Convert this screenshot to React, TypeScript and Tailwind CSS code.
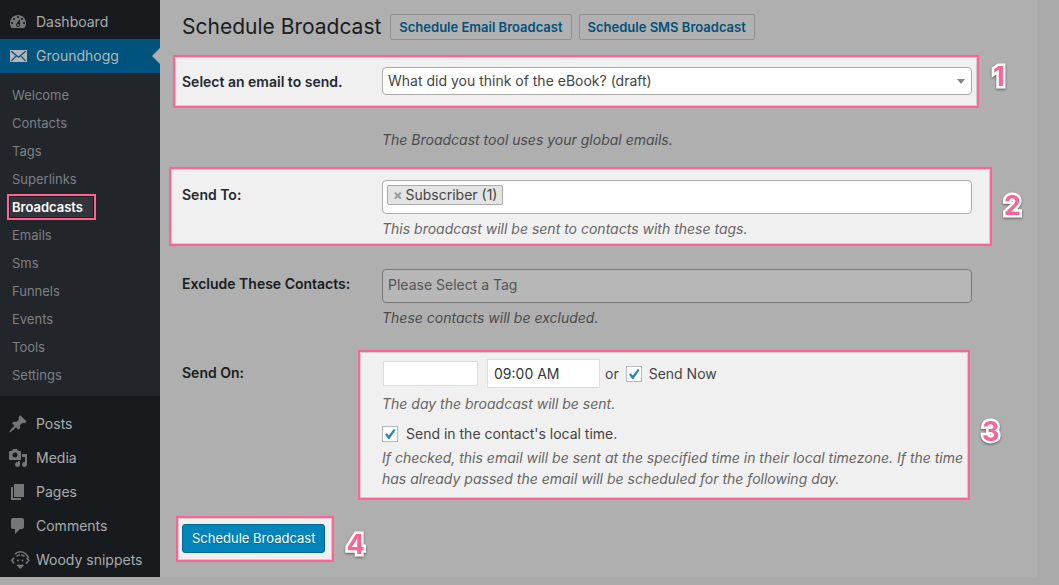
import React, { useState } from 'react';
import type { ReactNode } from 'react';
import clsx from 'clsx';

const MENU_ICONS = {
  dashboard:
    'M3.76 16h12.48c1.1-1.37 1.76-3.11 1.76-5 0-4.42-3.58-8-8-8s-8 3.58-8 8c0 1.89.66 3.63 1.76 5zM10 4c.55 0 1 .45 1 1s-.45 1-1 1-1-.45-1-1 .45-1 1-1zM6 6c.55 0 1 .45 1 1s-.45 1-1 1-1-.45-1-1 .45-1 1-1zm8 0c.55 0 1 .45 1 1s-.45 1-1 1-1-.45-1-1 .45-1 1-1zm-5.37 5.55L12 7v6c0 1.1-.9 2-2 2s-2-.9-2-2c0-.57.24-1.08.63-1.45zM4 10c.55 0 1 .45 1 1s-.45 1-1 1-1-.45-1-1 .45-1 1-1zm12 0c.55 0 1 .45 1 1s-.45 1-1 1-1-.45-1-1 .45-1 1-1zm-5 3c0-.55-.45-1-1-1s-1 .45-1 1 .45 1 1 1 1-.45 1-1z',
  posts:
    'M10.44 3.02l1.82-1.82 6.36 6.35-1.83 1.82c-1.05-.68-2.48-.57-3.41.36l-.75.75c-.92.93-1.04 2.35-.35 3.41l-1.83 1.82-2.41-2.41-2.8 2.79c-.42.42-3.38 2.71-3.8 2.29s1.86-3.39 2.28-3.81l2.79-2.79L4.1 9.36l1.83-1.82c1.05.69 2.48.57 3.4-.36l.75-.75c.93-.92 1.05-2.35.36-3.41z',
  media:
    'M13 11V4c0-.55-.45-1-1-1h-1.67L9 1H5L3.67 3H2c-.55 0-1 .45-1 1v7c0 .55.45 1 1 1h10c.55 0 1-.45 1-1zM7 4.5c1.38 0 2.5 1.12 2.5 2.5S8.38 9.5 7 9.5 4.5 8.38 4.5 7 5.62 4.5 7 4.5zM14 6h5v10.5c0 1.38-1.12 2.5-2.5 2.5S14 17.88 14 16.5s1.12-2.5 2.5-2.5c.17 0 .34.02.5.05V9h-3V6zm-4 8.05V13h2v3.5c0 1.38-1.12 2.5-2.5 2.5S7 17.88 7 16.5 8.12 14 9.5 14c.17 0 .34.02.5.05z',
  pages: 'M6 15V2h10v13H6zm-1 1h8v2H3V5h2v11z',
  comments: 'M5 2h9c1.1 0 2 .9 2 2v7c0 1.1-.9 2-2 2h-2l-5 5v-5H5c-1.1 0-2-.9-2-2V4c0-1.1.9-2 2-2z',
};

const SUBMENU = [
  'Welcome',
  'Contacts',
  'Tags',
  'Superlinks',
  'Broadcasts',
  'Emails',
  'Sms',
  'Funnels',
  'Events',
  'Tools',
  'Settings',
];

function MenuIcon({ name }: { name: keyof typeof MENU_ICONS }) {
  return (
    <svg viewBox="0 0 20 20" className="size-5 shrink-0 fill-[#747679]" aria-hidden="true">
      <path fillRule="evenodd" d={MENU_ICONS[name]} />
    </svg>
  );
}

function EnvelopeIcon() {
  return (
    <svg viewBox="0 0 20 20" className="size-5 shrink-0" aria-hidden="true">
      <path fill="#b4b7b9" d="M2 4h17v12H2z" />
      <path
        fill="none"
        stroke="#00537d"
        strokeWidth="1.3"
        strokeLinecap="round"
        d="M3.6 5.6l6.9 5.6 6.9-5.6M3.8 14.6l4-4.2M17.2 14.6l-4-4.2"
      />
    </svg>
  );
}

function WoodyIcon() {
  return (
    <svg viewBox="0 0 20 20" className="size-5 shrink-0 overflow-visible" aria-hidden="true">
      <g fill="none" stroke="#747679" strokeWidth="1.6">
        <path d="M6.2 7.8L3.8 10.4l2.4 3" />
        <path d="M18.6 8l2.2 2.4-2.8 3.4" />
        <path d="M7 4.2c2.6-3 8-3.4 10.8-.2 1.400 1.200 2.200 2.600 2.600 4.200" />
        <path d="M8.600 6.600c2.200-2.600 6.400-2.600 8.400.6" strokeDasharray="4 1" />
      </g>
      <g fill="#747679">
        <circle cx="10" cy="10.500" r="1" />
        <circle cx="14.500" cy="10.500" r="1" />
        <path d="M8.500 15.300l2-1 1.800.8 1.800-.8 2 1-3.800 3.700z" />
      </g>
    </svg>
  );
}

function MenuItem({ icon, label, current }: { icon: ReactNode; label: string; current?: boolean }) {
  return (
    <a
      href="#"
      className={clsx(
        'relative flex h-[34px] items-center gap-2 pl-2 text-sm',
        current ? 'bg-[#00537d] text-[#b4b7b9]' : 'text-[#a9abad]'
      )}
    >
      {icon}
      {label}
      {current && (
        <span className="absolute right-0 top-[9px] border-y-8 border-r-8 border-y-transparent border-r-[#afafaf]" />
      )}
    </a>
  );
}

function Sidebar() {
  return (
    <nav className="w-40 shrink-0 bg-[#181b1e] pt-[5px]">
      <MenuItem icon={<MenuIcon name="dashboard" />} label="Dashboard" />
      <MenuItem icon={<EnvelopeIcon />} label="Groundhogg" current />
      <ul className="mb-[11px] bg-[#22252a] pb-[7px] pl-3 pt-2 text-[13px]">
        {SUBMENU.map((item) => (
          <li key={item} className="flex h-7 items-center">
            {item === 'Broadcasts' ? (
              <a
                href="#"
                className="-ml-[5px] flex h-[26px] items-center border-2 border-[#ff6394] bg-[#32353a] pl-[3px] pr-[11px] font-semibold text-white shadow-[inset_0_0_0_1px_#1a1c20]"
              >
                {item}
              </a>
            ) : (
              <a href="#" className="text-[#7d8084]">
                {item}
              </a>
            )}
          </li>
        ))}
      </ul>
      <MenuItem icon={<MenuIcon name="posts" />} label="Posts" />
      <MenuItem icon={<MenuIcon name="media" />} label="Media" />
      <MenuItem icon={<MenuIcon name="pages" />} label="Pages" />
      <MenuItem icon={<MenuIcon name="comments" />} label="Comments" />
      <MenuItem icon={<WoodyIcon />} label="Woody snippets" />
    </nav>
  );
}

interface StepProps {
  number: number;
  className: string;
  badgeClassName: string;
  children: ReactNode;
}

function Step({ number, className, badgeClassName, children }: StepProps) {
  return (
    <section
      className={clsx(
        'relative border-2 border-[#ff6394] bg-[#f0f0f0] shadow-[inset_0_0_0_1px_#cfcfcf]',
        className
      )}
    >
      {children}
      <span
        className={clsx(
          'absolute left-full text-[27px] font-bold leading-8 text-[#ff6394] [-webkit-text-stroke:5px_white] [paint-order:stroke_fill] [stroke-linejoin:round] drop-shadow-[0_1px_1px_rgba(0,0,0,0.5)]',
          badgeClassName
        )}
      >
        {number}
      </span>
    </section>
  );
}

function Checkbox({ id, checked, onChange }: { id: string; checked: boolean; onChange: (v: boolean) => void }) {
  return (
    <span className="relative size-4 shrink-0">
      <input
        id={id}
        type="checkbox"
        checked={checked}
        onChange={(e) => onChange(e.target.checked)}
        className="block size-4 appearance-none border border-[#b4b9be] bg-white"
      />
      {checked && (
        <svg viewBox="0 0 16 16" className="pointer-events-none absolute inset-0 size-4" aria-hidden="true">
          <path d="M3 8.400l1.800-1.200 2 2.300 5-6.500 1.800.9-6.200 9.200h-1.200z" fill="#2a86b5" />
        </svg>
      )}
    </span>
  );
}

function Hint({ children, dimmed }: { children: ReactNode; dimmed?: boolean }) {
  return <p className={clsx('text-sm italic leading-5', dimmed ? 'text-[#4a4b4d]' : 'text-[#666]')}>{children}</p>;
}

export default function App() {
  const [sendNow, setSendNow] = useState(true);
  const [localTime, setLocalTime] = useState(true);
  const [date, setDate] = useState('');
  const [time, setTime] = useState('09:00 AM');

  return (
    <div className="flex min-h-screen bg-[#aaa] pb-2 font-['Inter','Liberation_Sans',sans-serif] text-sm text-[#444]">
      <Sidebar />
      <main className="mr-[22px] min-w-0 flex-1 bg-[#afafaf] pl-[22px] pr-[65px]">
        <header className="flex h-[55px] items-start pt-[14px]">
          <h1 className="mr-[9px] text-[21px] leading-[26px] text-[#191c20]">Schedule Broadcast</h1>
          <div className="flex gap-[7px]">
            {['Schedule Email Broadcast', 'Schedule SMS Broadcast'].map((label) => (
              <a
                key={label}
                href="#"
                className="flex h-[26px] items-center rounded-[2px] border border-[#8f8f8f] bg-[#b1b1b1] px-2 text-[13px] font-semibold text-[#00517c]"
              >
                {label}
              </a>
            ))}
          </div>
        </header>

        <form onSubmit={(e) => e.preventDefault()}>
          <Step
            number={1}
            className="-ml-[9px] -mr-[7px] flex pb-[11px] pl-[7px] pr-[5px] pt-[10px]"
            badgeClassName="ml-4 top-1"
          >
            <label htmlFor="email" className="w-[200px] shrink-0 pt-[5px] font-semibold leading-5 text-[#23282d]">
              Select an email to send.
            </label>
            <div className="relative flex-1">
              <select
                id="email"
                className="block h-7 w-full appearance-none rounded border border-[#aaa] bg-white px-[5px] text-sm text-[#444]"
              >
                <option>What did you think of the eBook? (draft)</option>
              </select>
              <span className="pointer-events-none absolute right-[7px] top-3 border-x-4 border-t-[5px] border-x-transparent border-t-[#888]" />
            </div>
          </Step>

          <div className="mb-[17px] mt-[22px] pl-[200px]">
            <Hint dimmed>The Broadcast tool uses your global emails.</Hint>
          </div>

          <Step
            number={2}
            className="-ml-[13px] -mr-[20px] flex pb-[5px] pl-[11px] pr-[18px] pt-[11px]"
            badgeClassName="ml-[14px] top-[21px]"
          >
            <label htmlFor="tags" className="w-[200px] shrink-0 pt-[5px] font-semibold leading-5 text-[#23282d]">
              Send To:
            </label>
            <div className="flex-1">
              <div className="mb-[5px] flex h-[34px] items-start rounded border border-[#aaa] bg-white px-1 pt-1">
                <span className="flex h-5 shrink-0 items-center gap-[3px] rounded-[2px] border border-[#aaa] bg-[#e4e4e4] px-[5px]">
                  <button type="button" aria-label="Remove Subscriber" className="font-bold text-[#999]">
                    ×
                  </button>
                  Subscriber (1)
                </span>
                <input id="tags" type="text" className="h-5 min-w-0 flex-1 px-1 outline-none" />
              </div>
              <Hint>This broadcast will be sent to contacts with these tags.</Hint>
            </div>
          </Step>

          <div className="mt-[23px] flex">
            <label htmlFor="exclude" className="w-[200px] shrink-0 pt-[5px] font-semibold leading-5 text-[#191c20]">
              Exclude These Contacts:
            </label>
            <div className="flex-1">
              <input
                id="exclude"
                type="text"
                placeholder="Please Select a Tag"
                className="mb-[5px] block h-[34px] w-full rounded border border-[#777] bg-[#b7b7b7] px-[5px] pb-1 text-sm placeholder:text-[#555]"
              />
              <Hint dimmed>These contacts will be excluded.</Hint>
            </div>
          </div>

          <div className="mt-[22px] flex">
            <label htmlFor="date" className="w-[176px] shrink-0 pt-[13px] font-semibold leading-5 text-[#191c20]">
              Send On:
            </label>
            <Step
              number={3}
              className="mr-[2px] flex-1 pb-[9px] pl-[22px] pt-[7px]"
              badgeClassName="ml-[14px] top-[64px]"
            >
              <div className="mb-[6px] flex items-center">
                <input
                  id="date"
                  type="text"
                  value={date}
                  onChange={(e) => setDate(e.target.value)}
                  className="ml-px h-[25px] w-[95px] border border-[#ddd] bg-white px-[6px]"
                />
                <input
                  type="text"
                  aria-label="Time"
                  value={time}
                  onChange={(e) => setTime(e.target.value)}
                  className="ml-[9px] h-[29px] w-[113px] border border-[#ddd] bg-white px-[6px] text-[#32373c]"
                />
                <span className="mx-[5px] pr-[2px]">or</span>
                <Checkbox id="send-now" checked={sendNow} onChange={setSendNow} />
                <label htmlFor="send-now" className="ml-[7px]">
                  Send Now
                </label>
              </div>
              <Hint>The day the broadcast will be sent.</Hint>
              <div className="mb-[3px] mt-[10px] flex items-center leading-5">
                <Checkbox id="local-time" checked={localTime} onChange={setLocalTime} />
                <label htmlFor="local-time" className="ml-2">
                  Send in the contact's local time.
                </label>
              </div>
              <p className="text-sm italic leading-[21px] text-[#666]">
                If checked, this email will be sent at the specified time in their local timezone. If the time has
                already passed the email will be scheduled for the following day.
              </p>
            </Step>
          </div>

          <Step
            number={4}
            className="-ml-[6px] mt-4 w-fit pb-[7px] pl-1 pr-[7px] pt-[6px]"
            badgeClassName="ml-[14px] top-[11px]"
          >
            <button
              type="submit"
              className="block h-[29px] rounded-[3px] border border-[#006799] bg-[#0085ba] px-[9px] text-[13px] text-white [text-shadow:0_1px_1px_#006799]"
            >
              Schedule Broadcast
            </button>
          </Step>
        </form>
      </main>
    </div>
  );
}
